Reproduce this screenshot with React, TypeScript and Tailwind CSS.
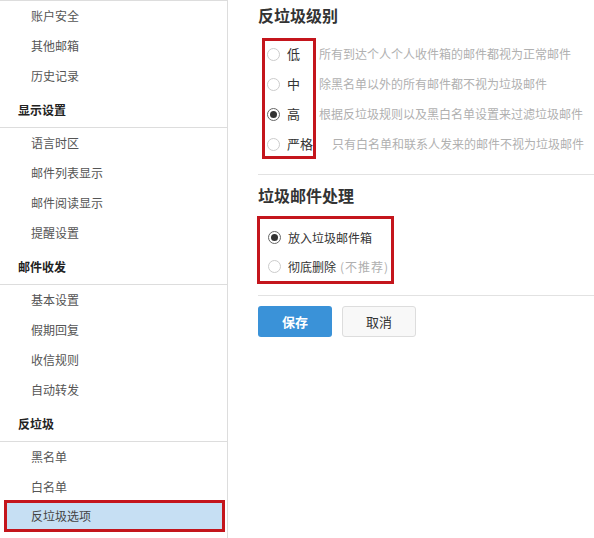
const font = { fontFamily: '"Noto Sans CJK SC", "Liberation Sans", sans-serif' };

type NavGroup = { title?: string; items: string[] };

const groups: NavGroup[] = [
  { items: ['账户安全', '其他邮箱', '历史记录'] },
  { title: '显示设置', items: ['语言时区', '邮件列表显示', '邮件阅读显示', '提醒设置'] },
  { title: '邮件收发', items: ['基本设置', '假期回复', '收信规则', '自动转发'] },
  { title: '反垃圾', items: ['黑名单', '白名单', '反垃圾选项'] },
];

const levels = [
  { label: '低', desc: '所有到达个人个人收件箱的邮件都视为正常邮件' },
  { label: '中', desc: '除黑名单以外的所有邮件都不视为垃圾邮件' },
  { label: '高', desc: '根据反垃圾规则以及黑白名单设置来过滤垃圾邮件', checked: true },
  { label: '严格', desc: '只有白名单和联系人发来的邮件不视为垃圾邮件' },
];

function Radio({ checked }: { checked?: boolean }) {
  return (
    <span
      className={`flex h-[13px] w-[13px] shrink-0 items-center justify-center rounded-full border bg-white ${
        checked ? 'border-[#666]' : 'border-[#ccc]'
      }`}
    >
      {checked && <span className="h-[7px] w-[7px] rounded-full bg-[#333]" />}
    </span>
  );
}

function Sidebar() {
  return (
    <aside className="w-[228px] shrink-0 border-r border-t border-[#ddd]">
      {groups.map((g, i) => (
        <div key={i}>
          {g.title && (
            <div className="flex h-[37px] items-center border-b border-[#ddd] pl-[18px] pt-[1px] text-[12px] font-bold text-[#222]">
              {g.title}
            </div>
          )}
          {g.items.map((item) =>
            item === '反垃圾选项' ? (
              <div
                key={item}
                className="-mt-[2px] ml-[4px] mr-[2px] flex h-[32px] items-center border-[3px] border-[#c4151c] bg-[#c6dff3] pl-[24px] text-[12px] text-[#444]"
              >
                {item}
              </div>
            ) : (
              <div key={item} className="flex h-[30px] items-center pl-[31px] text-[12px] text-[#555]">
                {item}
              </div>
            ),
          )}
        </div>
      ))}
    </aside>
  );
}

export default function App() {
  return (
    <div className="flex h-[538px] w-[594px] overflow-hidden bg-white" style={font}>
      <Sidebar />

      <main className="flex-1 pl-[30px] pt-[4px]">
        <h2 className="h-[22px] text-[16px] font-bold leading-[22px] text-[#333]">反垃圾级别</h2>

        <div className="relative mt-[13px]">
          {levels.map((l) => (
            <div key={l.label} className="flex h-[30px] items-center whitespace-nowrap">
              <span className="ml-[9px]">
                <Radio checked={l.checked} />
              </span>
              <span className="ml-[7px] text-[13px] text-[#333]">{l.label}</span>
              <span className="ml-[19px] text-[12px] text-[#b0b0b0]">{l.desc}</span>
            </div>
          ))}
          <div className="absolute left-[4px] top-[-1px] h-[121px] w-[54px] border-[3px] border-[#c4151c]" />
        </div>

        <div className="mt-[15px] border-t border-[#e2e2e2]" />

        <h2 className="mt-[9px] h-[22px] text-[16px] font-bold leading-[22px] text-[#333]">垃圾邮件处理</h2>

        <div className="-ml-[1px] mt-[10px] w-[137px] border-[3px] border-[#c4151c] pt-[4px]">
          <div className="flex h-[29px] items-center whitespace-nowrap pl-[8px]">
            <Radio checked />
            <span className="ml-[7px] text-[12px] text-[#333]">放入垃圾邮件箱</span>
          </div>
          <div className="flex h-[29px] items-center whitespace-nowrap pl-[8px]">
            <Radio />
            <span className="ml-[7px] text-[12px] text-[#333]">彻底删除</span>
            <span className="ml-[4px] text-[12px] tracking-[1px] text-[#b0b0b0]">(不推荐)</span>
          </div>
        </div>

        <div className="mt-[11px] border-t border-[#e2e2e2]" />

        <div className="mt-[10px] flex gap-[10px]">
          <button className="h-[31px] w-[74px] rounded-[3px] bg-[#3a92d8] text-[13px] font-bold text-white">
            保存
          </button>
          <button className="h-[31px] w-[74px] rounded-[3px] border border-[#ddd] bg-[#f8f8f8] text-[13px] text-[#333]">
            取消
          </button>
        </div>
      </main>
    </div>
  );
}
